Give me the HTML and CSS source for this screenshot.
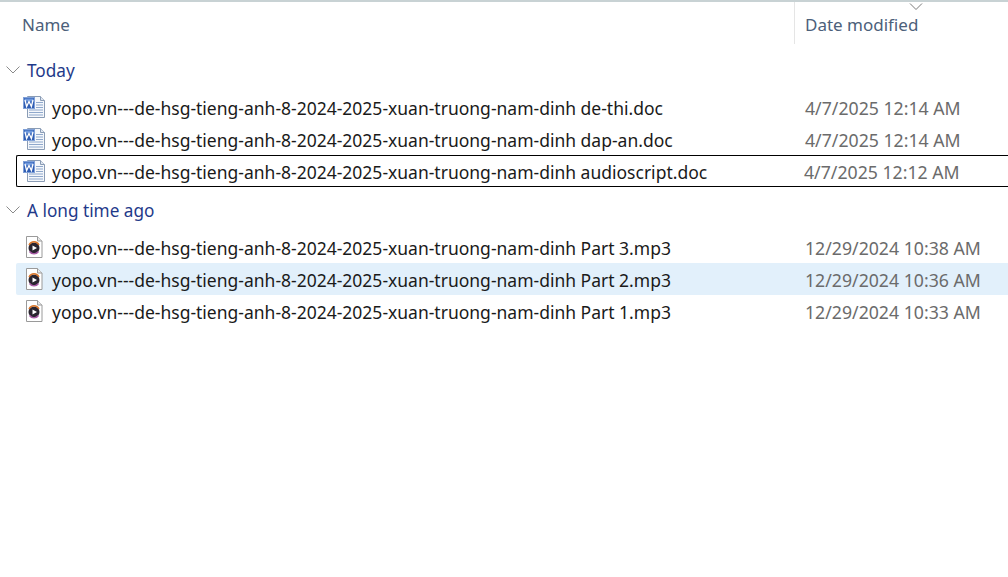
FILE: index.html
```html
<!DOCTYPE html>
<html>
<head>
	<title>Downloads</title>
	<meta charset="utf-8">
	<link rel="stylesheet" href="styles.css">
</head>
<body>
<svg width="0" height="0" class="defs">
	<symbol id="doc" viewBox="0 0 24 24">
		<path d="M4.500 .5h13l4 4v17h-17z" fill="#f4f7fb" stroke="#8a9cb5"/>
		<path d="M17.500 .5v4h4" fill="#dfe6f0" stroke="#8a9cb5"/>
		<path d="M13 6.500h7M13 9h7M13 11.500h7M6 14h14M6 16.500h14M6 19h14" stroke="#8fa8cc"/>
		<rect x=".5" y="1.500" width="11" height="11" fill="#2f5db3" stroke="#7fa0d8"/>
		<rect x="1.500" y="2.500" width="9" height="3" fill="#6d97dc"/>
		<path d="M2 4l1.600 6.500 2.400-5 2.400 5L10 4" fill="none" stroke="#fff" stroke-width="1.300"/>
	</symbol>
	<symbol id="mp3" viewBox="0 0 24 24">
		<path d="M3.500 .5h11l4.500 4.500v16.500h-15.500z" fill="#fff" stroke="#9a9a9a"/>
		<path d="M14.500 .5v4.500h4.500" fill="#e8e8e8" stroke="#9a9a9a"/>
		<circle cx="11" cy="12" r="5.500" fill="#2a2530"/>
		<path d="M6.500 15.500a5.500 5.500 0 0 0 9 0" fill="none" stroke="#a85aa6" stroke-width="1.400"/>
		<path d="M6 9a5.500 5.500 0 0 1 10 0" fill="none" stroke="#d9762c" stroke-width="1.400"/>
		<path d="M9.500 9.500l4.500 2.500-4.500 2.500z" fill="#fff"/>
	</symbol>
</svg>

<div class="head">
	<div class="head-name">Name</div>
	<div class="head-date">Date modified</div>
	<svg class="sort" width="14" height="7" viewBox="0 0 14 7"><path d="M1 .5l6 6 6-6" fill="none" stroke="#7a7a7a"/></svg>
</div>

<div class="group">
	<svg width="14" height="8" viewBox="0 0 14 8"><path d="M.5 .5l6.500 6.500 6.500-6.500" fill="none" stroke="#8a8a8a"/></svg>
	<span>Today</span>
</div>
<div class="rows">
	<div class="row">
		<div class="name"><svg class="ico"><use href="#doc"/></svg>yopo.vn---de-hsg-tieng-anh-8-2024-2025-xuan-truong-nam-dinh de-thi.doc</div>
		<div class="date">4/7/2025 12:14 AM</div>
	</div>
	<div class="row">
		<div class="name"><svg class="ico"><use href="#doc"/></svg>yopo.vn---de-hsg-tieng-anh-8-2024-2025-xuan-truong-nam-dinh dap-an.doc</div>
		<div class="date">4/7/2025 12:14 AM</div>
	</div>
	<div class="row focus">
		<div class="name"><svg class="ico"><use href="#doc"/></svg>yopo.vn---de-hsg-tieng-anh-8-2024-2025-xuan-truong-nam-dinh audioscript.doc</div>
		<div class="date">4/7/2025 12:12 AM</div>
	</div>
</div>

<div class="group">
	<svg width="14" height="8" viewBox="0 0 14 8"><path d="M.5 .5l6.500 6.500 6.500-6.500" fill="none" stroke="#8a8a8a"/></svg>
	<span>A long time ago</span>
</div>
<div class="rows">
	<div class="row">
		<div class="name"><svg class="ico"><use href="#mp3"/></svg>yopo.vn---de-hsg-tieng-anh-8-2024-2025-xuan-truong-nam-dinh Part 3.mp3</div>
		<div class="date">12/29/2024 10:38 AM</div>
	</div>
	<div class="row selected">
		<div class="name"><svg class="ico"><use href="#mp3"/></svg>yopo.vn---de-hsg-tieng-anh-8-2024-2025-xuan-truong-nam-dinh Part 2.mp3</div>
		<div class="date">12/29/2024 10:36 AM</div>
	</div>
	<div class="row">
		<div class="name"><svg class="ico"><use href="#mp3"/></svg>yopo.vn---de-hsg-tieng-anh-8-2024-2025-xuan-truong-nam-dinh Part 1.mp3</div>
		<div class="date">12/29/2024 10:33 AM</div>
	</div>
</div>
</body>
</html>
```

FILE: styles.css
```css
html, body {
	margin: 0;
	padding: 0;
	height: 100%;
	overflow: hidden;
	background: #fff;
}
body {
	font-family: "Noto Sans", "Open Sans", sans-serif;
	font-size: 17.5px;
	color: #1a1a1a;
}
.defs {
	display: block;
	height: 0;
}

.head {
	position: relative;
	display: flex;
	height: 42px;
	margin-bottom: 11px;
	border-top: 2px solid #c8d2d4;
	font-size: 17px;
	line-height: 45px;
	color: #4c607a;
}
.head-name {
	width: 772px;
	padding-left: 22px;
}
.head-date {
	flex: 1;
	padding-left: 10px;
	border-left: 1px solid #e5e5e5;
}
.sort {
	position: absolute;
	left: 909px;
	top: 1px;
}

.group {
	display: flex;
	align-items: center;
	height: 30px;
	margin-top: 8px;
	padding-left: 6px;
	font-size: 17.2px;
	color: #1f3a8a;
}
.group svg {
	margin-right: 7px;
}

.rows {
	padding: 6px 0 0 16px;
}
.row {
	display: flex;
	height: 32px;
	padding-top: 2px;
	line-height: 30px;
	box-sizing: border-box;
}
.name {
	display: flex;
	align-items: center;
	width: 778px;
	flex: none;
	padding-left: 7px;
	box-sizing: border-box;
	white-space: nowrap;
}
.ico {
	width: 24px;
	height: 24px;
	margin-right: 5px;
	flex: none;
}
.date {
	padding-left: 11px;
	font-size: 17.7px;
	color: #6b6b6b;
}
.focus {
	border: 1px solid #000;
	border-right: 0;
	border-radius: 2px 0 0 2px;
	line-height: 28px;
}
.focus .name {
	padding-left: 6px;
	width: 777px;
}
.focus .date {
	padding-left: 10px;
}
.selected {
	background: #e2f0fb;
	border-radius: 2px 0 0 2px;
}
```
